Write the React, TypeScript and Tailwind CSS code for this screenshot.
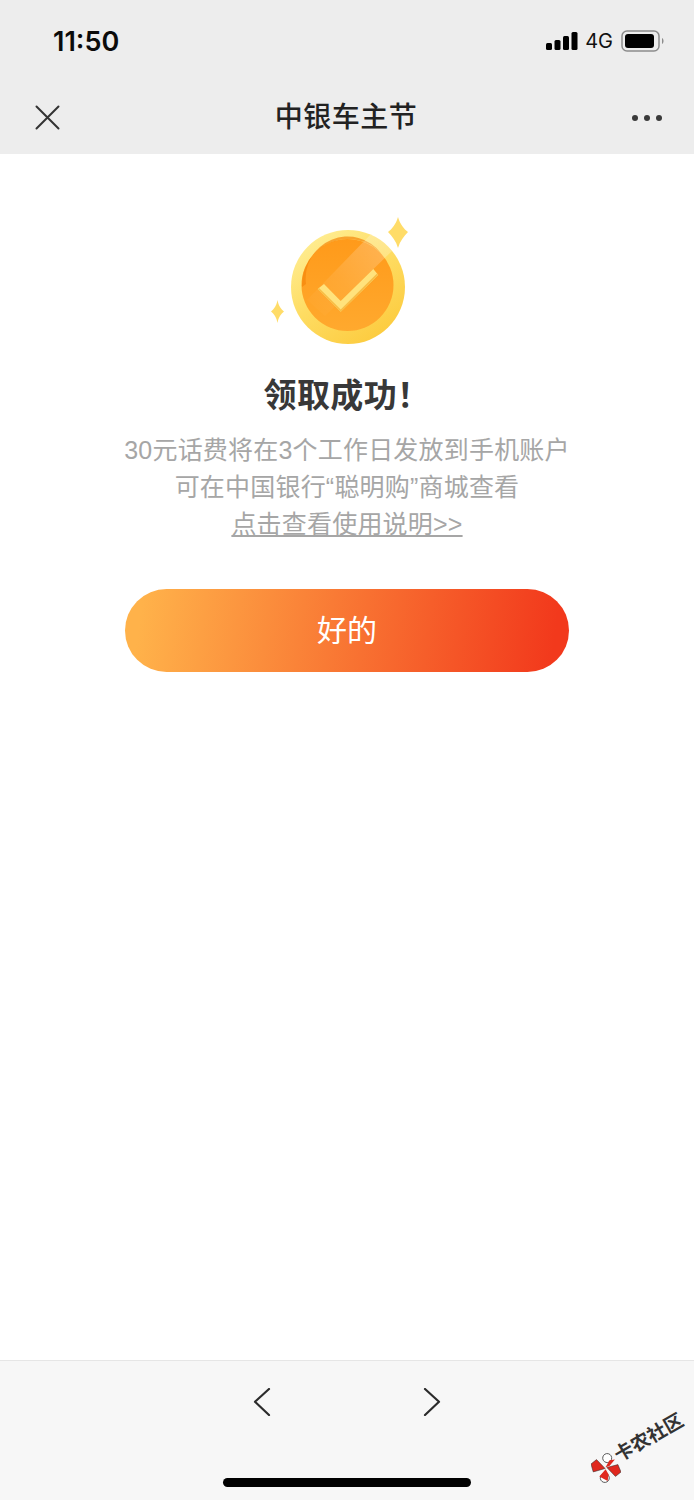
const cjk = "font-['Liberation_Sans','Noto_Sans_CJK_SC',sans-serif]";

function CoinIcon() {
  return (
    <svg width="160" height="140" viewBox="0 0 160 140" className="mx-auto block">
      <defs>
        <linearGradient id="rim" x1="0.1" y1="0" x2="0.8" y2="1">
          <stop offset="0" stopColor="#fff09a" />
          <stop offset="0.5" stopColor="#fedc62" />
          <stop offset="1" stopColor="#fcca3c" />
        </linearGradient>
        <linearGradient id="face" x1="0" y1="0" x2="0" y2="1">
          <stop offset="0" stopColor="#ff9a1a" />
          <stop offset="1" stopColor="#ffa92e" />
        </linearGradient>
        <linearGradient id="shine" x1="1" y1="0" x2="0" y2="1">
          <stop offset="0" stopColor="#ffffff" stopOpacity="0.28" />
          <stop offset="0.6" stopColor="#ffffff" stopOpacity="0.08" />
          <stop offset="1" stopColor="#ffffff" stopOpacity="0" />
        </linearGradient>
        <clipPath id="coinClip">
          <circle cx="81" cy="75" r="57" />
        </clipPath>
      </defs>
      <path d="M131 5 C133 12 137 17 141 20 C137 24 133 29 131 36 C129 29 125 24 121 20 C125 17 129 12 131 5Z" fill="#ffdc68" />
      <path d="M10.500 88 C11.500 94 14 97 17 99.500 C14 102 11.500 105 10.500 111 C9.500 105 7 102 4 99.500 C7 97 9.500 94 10.500 88Z" fill="#ffdc68" />
      <circle cx="81" cy="75" r="57" fill="url(#rim)" />
      <circle cx="80.500" cy="73" r="46" fill="url(#face)" />
      <path d="M35 75 A46 46 0 0 1 114 41 A42 42 0 0 0 39 72 Z" fill="#f5860c" opacity="0.7" />
      <g clipPath="url(#coinClip)">
        <polygon points="106,20 126,38 58,104 40,88" fill="url(#shine)" />
      </g>
      <polygon points="57,72 50.700,77 73.700,99.700 111.300,63 106.300,57 73.700,89" fill="#ffe27c" />
      <polygon points="50.700,77 73.700,99.700 111.300,63 110,61.500 73.700,97.500 52,76" fill="#f8bd45" />
    </svg>
  );
}

function LogoMark() {
  return (
    <svg width="30" height="30" viewBox="0 0 30 30">
      <g transform="rotate(-30 15 15)">
        <circle cx="9" cy="23" r="4.500" fill="#fff" stroke="#444" strokeWidth="0.8" />
        <circle cx="21" cy="7" r="4.500" fill="#fff" stroke="#444" strokeWidth="0.8" />
        <polygon points="2,12 14,15 11,3 4,4" fill="#e0281e" stroke="#333" strokeWidth="0.5" />
        <polygon points="16,15 27,18 26,26 19,27" fill="#e0281e" stroke="#333" strokeWidth="0.5" />
        <polygon points="15,14 22,10 27,12 19,15" fill="#e0281e" />
        <polygon points="14,16 5,19 10,27 14,22" fill="#e0281e" />
      </g>
    </svg>
  );
}

export default function App() {
  return (
    <div className={`relative flex h-[1500px] w-[694px] flex-col overflow-hidden bg-white ${cjk}`}>
      <header className="h-[154px] shrink-0 bg-[#ededed]">
        <div className="flex h-[82px] items-center justify-between pl-[53px] pr-[29px]">
          <span className="pt-[2px] font-['Inter',sans-serif] text-[27px] font-semibold text-[#0b0b0b]">11:50</span>
          <div className="flex items-center">
            <svg width="32" height="20" viewBox="0 0 32 20">
              <rect x="0" y="12" width="6" height="7" rx="1.500" fill="#000" />
              <rect x="8.500" y="9" width="6" height="10" rx="1.500" fill="#000" />
              <rect x="17" y="5" width="6" height="14" rx="1.500" fill="#000" />
              <rect x="25.500" y="1" width="6" height="18" rx="1.500" fill="#000" />
            </svg>
            <span className="ml-[7px] font-['Inter',sans-serif] text-[20px] font-normal text-[#111]">4G</span>
            <svg width="44" height="22" viewBox="0 0 44 22" className="ml-[8px]">
              <rect x="1" y="1" width="37" height="20" rx="5" fill="none" stroke="#8c8c8c" strokeWidth="1.500" />
              <rect x="4" y="4" width="29" height="14" rx="3" fill="#000" />
              <path d="M41 8 C43 9 43 13 41 14Z" fill="#8c8c8c" />
            </svg>
          </div>
        </div>
        <div className="flex h-[72px] items-center justify-between pl-[35px] pr-[32px]">
          <svg width="25" height="25" viewBox="0 0 25 25" className="mt-[-2px] shrink-0">
            <path d="M1.500 1.500 L23.500 23.500 M23.500 1.500 L1.500 23.500" stroke="#333" strokeWidth="2" strokeLinecap="round" />
          </svg>
          <h1 className="text-[28px] font-medium tracking-[0.5px] text-[#222]">中银车主节</h1>
          <div className="flex w-[30px] justify-between">
            <span className="size-[6px] rounded-full bg-[#3a3a3a]" />
            <span className="size-[6px] rounded-full bg-[#3a3a3a]" />
            <span className="size-[6px] rounded-full bg-[#3a3a3a]" />
          </div>
        </div>
      </header>

      <main className="flex-1 pt-[58px] text-center">
        <CoinIcon />
        <h2 className="mt-[22px] text-[33px] leading-[44px] font-bold tracking-[0.4px] text-[#383838]">领取成功！</h2>
        <div className="mt-[14px] text-[25px] leading-[37px] tracking-[0.2px] text-[#a6a6a6]">
          <p>30元话费将在3个工作日发放到手机账户</p>
          <p>可在中国银行“聪明购”商城查看</p>
          <p className="underline">点击查看使用说明&gt;&gt;</p>
        </div>
        <button className="mx-auto mt-[46px] block h-[83px] w-[444px] rounded-full bg-[linear-gradient(97deg,#ffb24a_4%,#f2391c_96%)] text-[30px] text-white">
          好的
        </button>
      </main>

      <footer className="flex h-[140px] shrink-0 flex-col border-t border-[#e6e6e6] bg-[#f7f7f7]">
        <div className="flex justify-center gap-[146px] pt-[27px]">
          <svg width="24" height="28" viewBox="0 0 24 28">
            <path d="M19 1 L5 13.700 L19 27" fill="none" stroke="#2b2b2b" strokeWidth="2.200" strokeLinecap="round" strokeLinejoin="round" />
          </svg>
          <svg width="24" height="28" viewBox="0 0 24 28">
            <path d="M5 1 L19 13.700 L5 27" fill="none" stroke="#2b2b2b" strokeWidth="2.200" strokeLinecap="round" strokeLinejoin="round" />
          </svg>
        </div>
        <div className="mx-auto mt-auto mb-[13px] h-[9px] w-[248px] rounded-full bg-black" />
      </footer>

      <div className="absolute left-[591px] top-[1453px]">
        <LogoMark />
      </div>
      <span className="absolute left-[611px] top-[1425px] rotate-[-30deg] text-[19px] leading-[26px] font-bold whitespace-nowrap text-[#333]">
        卡农社区
      </span>
    </div>
  );
}
